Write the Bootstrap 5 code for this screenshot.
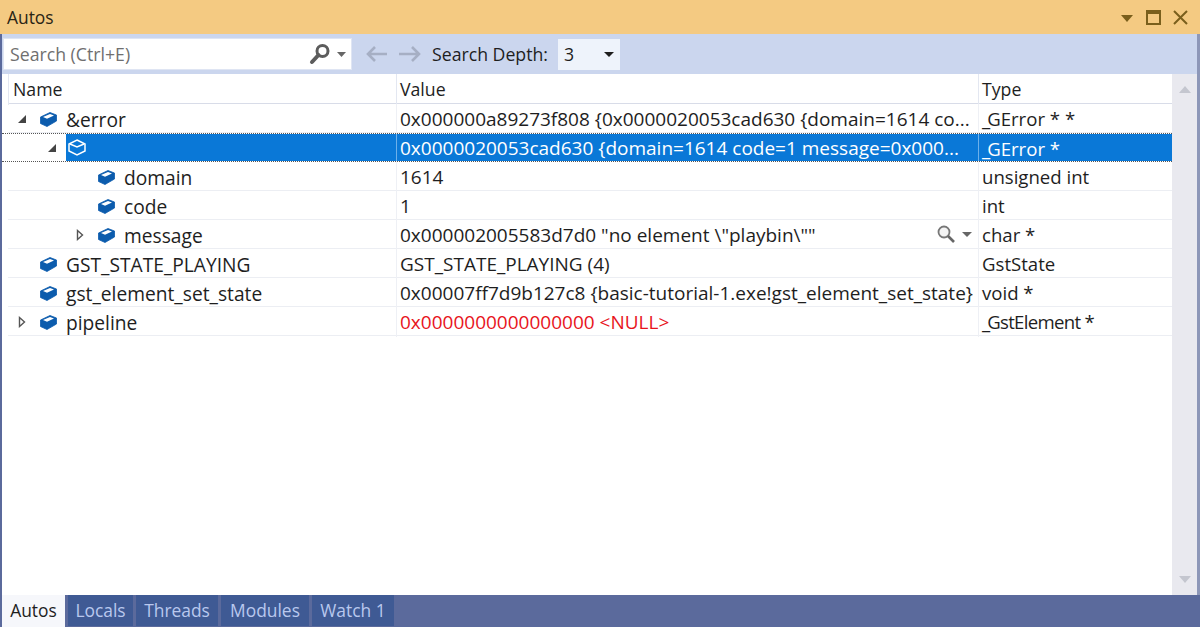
<!DOCTYPE html>
<html lang="en">
<head>
<meta charset="utf-8">
<title>Autos</title>
<link href="https://cdn.jsdelivr.net/npm/bootstrap@5.3.0/dist/css/bootstrap.min.css" rel="stylesheet">
<style>
html,body{height:100%;margin:0;overflow:hidden}
body{font-family:"Open Sans","Liberation Sans",sans-serif;font-size:17.7px;color:#1e1e1e;background:#fff}
.shell{width:1200px;height:627px}
.titlebar{height:34px;background:#f4ca82;padding:1px 12px 0 7px;color:#2a2415;font-size:17.4px}
.wincontrols{gap:12px}
.body-frame{border-left:2px solid #5b6a9c;border-right:3px solid #8d97b8;min-height:0}
.toolbar{height:40px;background:#cbd6ee;flex:none}
.searchbox{width:349px;height:32px;margin-left:1px;background:#fff;border:1px solid #dfe5f3;padding:0 5px 0 6px;color:#6f6f6f}
.searchtools{gap:6px}
.depth{width:62px;height:31px;margin-left:10px;background:#eef3fb;padding:0 6px 0 6px;color:#1e1e1e}
.lbl{margin-left:10px}
.navicons{margin-left:13px;gap:10px}
.gridwrap{min-height:0}
.treepane{width:1170px}
.hdr,.trow{display:grid;grid-template-columns:388px 582px 194px;margin-left:6px}
.hdr{height:30px;border-bottom:1px solid #d8dce8;line-height:31px}
.hdr>div{padding-left:3px;border-left:1px solid #e3e7f1}
.hdr>div:first-child{padding-left:4px}
.trow{height:29px;line-height:30px;border-bottom:1px solid #eceef3;white-space:nowrap}
.cellv{font-size:19px;padding-left:3px;border-left:1px solid #eef0f5;overflow:hidden;position:relative}
.cellt{font-size:18.600px;padding-left:3px;border-left:1px solid #eef0f5;overflow:hidden}
.namecell{font-size:19.200px;min-width:0}
.tw{width:12px;height:12px;flex:none}
.ind0{padding-left:8px}
.ind2{padding-left:66px}
.ind2b{padding-left:78px}
.ind3{padding-left:20px}
.cube{flex:none;margin-left:12px;margin-right:9px}
.nm{position:relative;top:1px}
.sel{margin-left:0;padding-left:6px;height:29px;border-top:1px dotted #555;border-bottom:1px dotted #555;line-height:29px;width:1170px}
.sel .namecell{height:27px;padding-left:38px}
.self{background:#0a78d7;flex:1;height:100%;margin-left:8px;padding-left:2px}
.sel .cellv,.sel .cellt{background:#0a78d7;color:#fff;border-left:1px solid #6db0ea}
.nullv{color:#e8141c}
.us{letter-spacing:-3px}
.tight{letter-spacing:-.7px}
.scrollcol{width:25px;background:#e9e9ef}
.viz{position:absolute;right:6px;top:4px;gap:6px}
.tabstrip{height:32px;background:#5b6a9c;flex:none;padding-left:2px;gap:3px}
.tabx{height:31px;background:#3f5a94;color:#b9c8ee;line-height:31px;text-align:center;font-size:17.400px}
.tabx.on{background:#f6f7fb;color:#1e1e1e;width:63px;height:32px}
.w65{width:65px}.w82{width:82px}.w88{width:88px}
</style>
</head>
<body>
<div class="shell d-flex flex-column">
  <div class="titlebar d-flex align-items-center justify-content-between">
    <span>Autos</span>
    <span class="d-flex align-items-center wincontrols">
      <svg width="14" height="8" viewBox="0 0 14 8"><path d="M1 1h12L7 8z" fill="#7a5f1c"/></svg>
      <svg width="15" height="15" viewBox="0 0 15 15"><rect x="1" y="1" width="13" height="13" fill="none" stroke="#7a5f1c" stroke-width="2"/><rect x="1" y="1" width="13" height="3" fill="#7a5f1c"/></svg>
      <svg width="15" height="15" viewBox="0 0 15 15"><path d="M1 1l13 13M14 1L1 14" stroke="#7a5f1c" stroke-width="2" fill="none"/></svg>
    </span>
  </div>
  <div class="body-frame flex-grow-1 d-flex flex-column">
    <div class="toolbar d-flex align-items-center">
      <div class="searchbox d-flex align-items-center justify-content-between">
        <span>Search (Ctrl+E)</span>
        <span class="d-flex align-items-center searchtools">
          <svg width="22" height="22" viewBox="0 0 22 22"><circle cx="13.500" cy="8" r="5.500" fill="none" stroke="#5c5c5c" stroke-width="3"/><path d="M9.500 12L3 19" stroke="#5c5c5c" stroke-width="4" stroke-linecap="round"/></svg>
          <svg width="9" height="5" viewBox="0 0 9 5"><path d="M0 0h9L4.500 5z" fill="#666"/></svg>
        </span>
      </div>
      <div class="d-flex align-items-center navicons">
        <svg width="23" height="18" viewBox="0 0 23 18"><path d="M22 9H3M10 2L3 9l7 7" fill="none" stroke="#a6afc4" stroke-width="2.600"/></svg>
        <svg width="24" height="18" viewBox="0 0 24 18"><path d="M1 9h20M14 2l7 7-7 7" fill="none" stroke="#a6afc4" stroke-width="2.600"/></svg>
      </div>
      <span class="lbl">Search Depth:</span>
      <div class="depth d-flex align-items-center justify-content-between">
        <span>3</span>
        <svg width="10" height="5" viewBox="0 0 10 5"><path d="M0 0h10L5 5z" fill="#1e1e1e"/></svg>
      </div>
    </div>
    <div class="gridwrap flex-grow-1 d-flex">
      <div class="treepane flex-grow-1">
        <div class="hdr"><div>Name</div><div>Value</div><div>Type</div></div>

        <div class="trow">
          <div class="namecell ind0 d-flex align-items-center">
            <svg class="tw" viewBox="0 0 12 12"><path d="M10 2v8H2z" fill="#444"/></svg>
            <svg class="cube" width="17" height="15" viewBox="0 0 17 15"><use href="#cubeicon"/></svg>
            <span class="nm">&amp;error</span>
          </div>
          <div class="cellv">0x000000a89273f808 {0x0000020053cad630 {domain=1614 co...</div>
          <div class="cellt"><span class="us">_</span>GError * *</div>
        </div>

        <div class="trow sel">
          <div class="namecell d-flex align-items-center">
            <svg class="tw" viewBox="0 0 12 12"><path d="M10 2v8H2z" fill="#444"/></svg>
            <div class="self d-flex align-items-center">
              <svg width="18" height="17" viewBox="0 0 18 17"><path d="M9 1l8 4v7l-8 4-8-4V5z" fill="#0a78d7" stroke="#fff" stroke-width="1.500"/><path d="M2 5l7 3 7-3" fill="none" stroke="#fff" stroke-width="1.500"/></svg>
            </div>
          </div>
          <div class="cellv">0x0000020053cad630 {domain=1614 code=1 message=0x000...</div>
          <div class="cellt"><span class="us">_</span>GError *</div>
        </div>

        <div class="trow">
          <div class="namecell ind2b d-flex align-items-center">
            <svg class="cube" width="17" height="15" viewBox="0 0 17 15"><use href="#cubeicon"/></svg>
            <span class="nm">domain</span>
          </div>
          <div class="cellv">1614</div>
          <div class="cellt">unsigned int</div>
        </div>

        <div class="trow">
          <div class="namecell ind2b d-flex align-items-center">
            <svg class="cube" width="17" height="15" viewBox="0 0 17 15"><use href="#cubeicon"/></svg>
            <span class="nm">code</span>
          </div>
          <div class="cellv">1</div>
          <div class="cellt">int</div>
        </div>

        <div class="trow">
          <div class="namecell ind2 d-flex align-items-center">
            <svg class="tw" viewBox="0 0 12 12"><path d="M3.500 1.500l5 4.500-5 4.500z" fill="#fff" stroke="#555" stroke-width="1.400"/></svg>
            <svg class="cube" width="17" height="15" viewBox="0 0 17 15"><use href="#cubeicon"/></svg>
            <span class="nm">message</span>
          </div>
          <div class="cellv">0x000002005583d7d0 "no element \"playbin\""
            <span class="viz d-flex align-items-center">
              <svg width="20" height="20" viewBox="0 0 20 20"><circle cx="8" cy="8" r="5.500" fill="#f4f4f4" stroke="#777" stroke-width="1.800"/><path d="M12 12l6 6" stroke="#666" stroke-width="2.600"/></svg>
              <svg width="10" height="5" viewBox="0 0 10 5"><path d="M0 0h10L5 5z" fill="#666"/></svg>
            </span>
          </div>
          <div class="cellt">char *</div>
        </div>

        <div class="trow">
          <div class="namecell ind3 d-flex align-items-center">
            <svg class="cube" width="17" height="15" viewBox="0 0 17 15"><use href="#cubeicon"/></svg>
            <span class="nm">GST_STATE_PLAYING</span>
          </div>
          <div class="cellv">GST_STATE_PLAYING (4)</div>
          <div class="cellt">GstState</div>
        </div>

        <div class="trow">
          <div class="namecell ind3 d-flex align-items-center">
            <svg class="cube" width="17" height="15" viewBox="0 0 17 15"><use href="#cubeicon"/></svg>
            <span class="nm">gst_element_set_state</span>
          </div>
          <div class="cellv">0x00007ff7d9b127c8 {basic-tutorial-1.exe!gst_element_set_state}</div>
          <div class="cellt">void *</div>
        </div>

        <div class="trow">
          <div class="namecell ind0 d-flex align-items-center">
            <svg class="tw" viewBox="0 0 12 12"><path d="M3.500 1.500l5 4.500-5 4.500z" fill="#fff" stroke="#555" stroke-width="1.400"/></svg>
            <svg class="cube" width="17" height="15" viewBox="0 0 17 15"><use href="#cubeicon"/></svg>
            <span class="nm">pipeline</span>
          </div>
          <div class="cellv nullv">0x0000000000000000 &lt;NULL&gt;</div>
          <div class="cellt tight"><span class="us">_</span>GstElement *</div>
        </div>
      </div>
      <div class="scrollcol d-flex flex-column justify-content-between align-items-center py-2">
        <svg class="mt-1" width="12" height="7" viewBox="0 0 12 7"><path d="M0 7h12L6 0z" fill="#c4c6cf"/></svg>
        <svg class="mb-1" width="12" height="7" viewBox="0 0 12 7"><path d="M0 0h12L6 7z" fill="#c4c6cf"/></svg>
      </div>
    </div>
  </div>
  <div class="tabstrip d-flex">
    <div class="tabx on">Autos</div>
    <div class="tabx w65">Locals</div>
    <div class="tabx w82">Threads</div>
    <div class="tabx w88">Modules</div>
    <div class="tabx w82">Watch 1</div>
  </div>
</div>
<svg width="0" height="0" class="d-block" aria-hidden="true"><defs>
  <symbol id="cubeicon" viewBox="0 0 17 15"><path d="M.5 5L10 .5l6.500 2.500v6L7 14.500.5 11.500z" fill="#0c5cad" stroke="#0c5cad" stroke-width=".8" stroke-linejoin="round"/><path d="M3 5L10 2l4 1.500-7 3.300z" fill="#fff"/></symbol>
</defs></svg>
<script src="https://cdn.jsdelivr.net/npm/bootstrap@5.3.0/dist/js/bootstrap.bundle.min.js"></script>
</body>
</html>
